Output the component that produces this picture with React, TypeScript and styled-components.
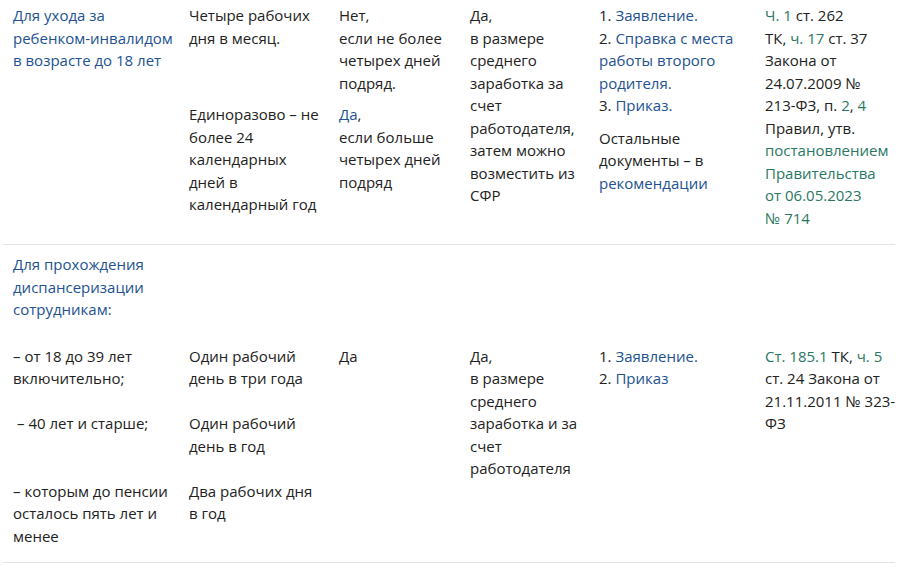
import React from "react";
import styled, { createGlobalStyle } from "styled-components";

const Global = createGlobalStyle`
  html, body { margin: 0; padding: 0; background: #ffffff; }
  body {
    font-family: "Open Sans", "Liberation Sans", sans-serif;
    font-size: 15px;
    line-height: 22.5px;
    color: #222222;
  }
`;

const Table = styled.div`
  margin: -4px 6px 0 3px;
  width: 892px;
`;

const Row = styled.div<{ $bordered?: boolean }>`
  display: grid;
  grid-template-columns: 160px 134px 115px 113px 150px 132px;
  column-gap: 16px;
  padding: 8px 0 15px 10px;
  border-bottom: 1px solid ${(p) => (p.$bordered ? "#e3e3e3" : "transparent")};
`;

const Cell = styled.div`
  min-width: 0;
`;

const Para = styled.p<{ $gap?: number }>`
  margin: ${(p) => p.$gap ?? 0}px 0 0 0;
`;

const Blue = styled.span`
  color: #22528f;
`;

const Green = styled.span`
  color: #2a7864;
`;

const NoWrap = styled.span`
  white-space: nowrap;
`;

const Indent = styled.span`
  padding-left: 4px;
`;

export default function App() {
  return (
    <>
      <Global />
      <Table>
        <Row $bordered>
          <Cell>
            <Para>
              <Blue>Для ухода за ребенком-инвалидом в возрасте до 18 лет</Blue>
            </Para>
          </Cell>
          <Cell>
            <Para>Четыре рабочих дня в месяц.</Para>
            <Para $gap={54}>Единоразово – не более 24 календарных дней в календарный год</Para>
          </Cell>
          <Cell>
            <Para>
              Нет,
              <br />
              если не более четырех дней подряд.
            </Para>
            <Para $gap={9}>
              <Blue>Да</Blue>,
              <br />
              если больше четырех дней подряд
            </Para>
          </Cell>
          <Cell>
            <Para>
              Да,
              <br />
              в размере среднего заработка за счет работодателя, затем можно возместить из СФР
            </Para>
          </Cell>
          <Cell>
            <Para>
              1. <Blue>Заявление.</Blue>
              <br />
              2. <Blue>Справка с места работы второго родителя.</Blue>
              <br />
              3. <Blue>Приказ.</Blue>
            </Para>
            <Para $gap={10}>
              Остальные документы – в <Blue>рекомендации</Blue>
            </Para>
          </Cell>
          <Cell>
            <Para>
              <Green>Ч. 1</Green> ст. 262
              <br />
              ТК, <Green>ч. 17</Green> ст. 37 Закона от 24.07.2009 № <NoWrap>213-ФЗ,</NoWrap> п.{" "}
              <Green>2</Green>, <Green>4</Green> Правил, утв.{" "}
              <Green>постановлением Правительства от&nbsp;06.05.2023 №&nbsp;714</Green>
            </Para>
          </Cell>
        </Row>

        <Row>
          <Cell>
            <Para>
              <Blue>Для прохождения диспансеризации сотрудникам:</Blue>
            </Para>
          </Cell>
        </Row>

        <Row $bordered>
          <Cell>
            <Para>– от 18 до 39 лет включительно;</Para>
            <Para $gap={22.5}>
              <Indent>– 40 лет и старше;</Indent>
            </Para>
            <Para $gap={45}>– которым до пенсии осталось пять лет и менее</Para>
          </Cell>
          <Cell>
            <Para>Один рабочий день в три года</Para>
            <Para $gap={22.5}>Один рабочий день в год</Para>
            <Para $gap={22.5}>Два рабочих дня в год</Para>
          </Cell>
          <Cell>
            <Para>Да</Para>
          </Cell>
          <Cell>
            <Para>
              Да,
              <br />
              в размере среднего заработка и за счет работодателя
            </Para>
          </Cell>
          <Cell>
            <Para>
              1. <Blue>Заявление.</Blue>
              <br />
              2. <Blue>Приказ</Blue>
            </Para>
          </Cell>
          <Cell>
            <Para>
              <Green>Ст. 185.1</Green> ТК, <Green>ч. 5</Green> ст. 24 Закона от 21.11.2011 № 323-ФЗ
            </Para>
          </Cell>
        </Row>
      </Table>
    </>
  );
}
